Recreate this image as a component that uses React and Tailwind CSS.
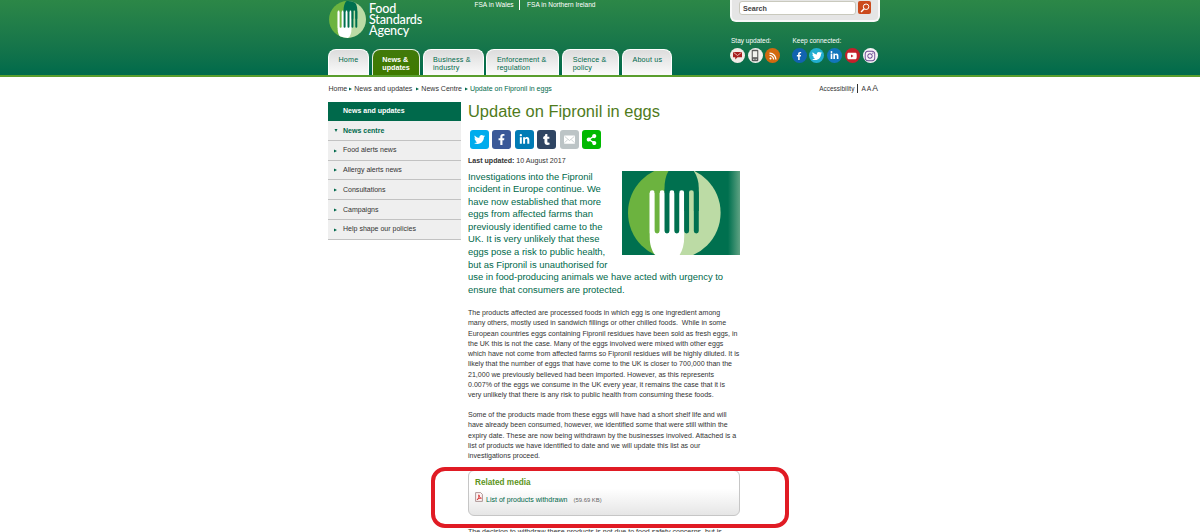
import React from 'react';
import {
  FaTwitter, FaFacebookF, FaLinkedinIn, FaTumblr, FaShareAlt, FaYoutube, FaInstagram, FaRss,
} from 'react-icons/fa';

const tabs = [
  { lines: ['Home'], width: 'w-[41px]' },
  { lines: ['News &', 'updates'], width: 'w-[48px]', active: true },
  { lines: ['Business &', 'industry'], width: 'w-[61px]' },
  { lines: ['Enforcement &', 'regulation'], width: 'w-[73px]' },
  { lines: ['Science &', 'policy'], width: 'w-[57px]' },
  { lines: ['About us'], width: 'w-[50px]' },
];

const sideLinks = ['Food alerts news', 'Allergy alerts news', 'Consultations', 'Campaigns', 'Help shape our policies'];

const shares = [
  { icon: FaTwitter, color: 'bg-[#00aced]' },
  { icon: FaFacebookF, color: 'bg-[#3b5998]' },
  { icon: FaLinkedinIn, color: 'bg-[#007bb5]' },
  { icon: FaTumblr, color: 'bg-[#2f4563]' },
  { icon: Envelope, color: 'bg-[#bcc4c6]' },
  { icon: FaShareAlt, color: 'bg-[#00b900]' },
];

const intro = [
  'Investigations into the Fipronil',
  'incident in Europe continue. We',
  'have now established that more',
  'eggs from affected farms than',
  'previously identified came to the',
  'UK. It is very unlikely that these',
  'eggs pose a risk to public health,',
  'but as Fipronil is unauthorised for',
  'use in food-producing animals we have acted with urgency to',
  'ensure that consumers are protected.',
];

const products = [
  'The products affected are processed foods in which egg is one ingredient among',
  'many others, mostly used in sandwich fillings or other chilled foods.\u00a0 While in some',
  'European countries eggs containing Fipronil residues have been sold as fresh eggs, in',
  'the UK this is not the case. Many of the eggs involved were mixed with other eggs',
  'which have not come from affected farms so Fipronil residues will be highly diluted. It is',
  'likely that the number of eggs that have come to the UK is closer to 700,000 than the',
  '21,000 we previously believed had been imported. However, as this represents',
  '0.007% of the eggs we consume in the UK every year, it remains the case that it is',
  'very unlikely that there is any risk to public health from consuming these foods.',
];

const shelfLife = [
  'Some of the products made from these eggs will have had a short shelf life and will',
  'have already been consumed, however, we identified some that were still within the',
  'expiry date. These are now being withdrawn by the businesses involved. Attached is a',
  'list of products we have identified to date and we will update this list as our',
  'investigations proceed.',
];

function Lines({ items }) {
  return items.map((line) => <span key={line} className="block whitespace-nowrap">{line}</span>);
}

function Envelope({ className }) {
  return (
    <svg viewBox="0 0 16 12" className={className} fill="none" stroke="#bcc4c6" strokeWidth="1.1">
      <rect width="16" height="12" rx="1" fill="#fff" stroke="none" />
      <path d="M1 1.5 8 7.5l7-6M1 10.5l4.500-4.500M15 10.5l-4.500-4.500" />
    </svg>
  );
}

// fork inside a plate, shared by the logo and the article image
function Fork({ id }) {
  return (
    <>
      <defs>
        <clipPath id={id}><circle cx="52.3" cy="41.7" r="46.3" /></clipPath>
      </defs>
      <g clipPath={`url(#${id})`}>
        <rect x="0" y="-6" width="60" height="100" fill="#6cb33f" />
        <rect x="56" y="-6" width="50" height="100" fill="#bcdba5" />
        <path d="M42.5 40V17C42.5 8 45 0 51 -6H66C73 -1 76.8 8 76.8 17V40Z" fill="#00704f" />
        <path d="M27.7 22H62.2V66C62.2 75 60 81 55 88H36C30 81 27.7 75 27.7 66Z" fill="#fff" />
      </g>
      <path d="M27.6 21.8V18H42.5V21.8Z" fill="#6cb33f" />
      <path d="M42.5 18H62.3V22.2H42.5Z" fill="#00704f" />
      <g strokeWidth="4.95" strokeLinecap="round">
        <path d="M30.2 21.8V62M40.1 21.8V62M49.9 21.8V62M59.7 21.8V62" stroke="#fff" />
        <path d="M69.4 21.8V62" stroke="#bcdba5" />
        <path d="M35.1 21.5V60" stroke="#6cb33f" />
        <path d="M45 21.5V60M54.8 21.5V60M64.6 21.5V60M74.3 21.5V60" stroke="#00704f" />
      </g>
    </>
  );
}

function Arrow() {
  return <svg viewBox="0 0 4 4" className="w-[3px] h-[4px]" fill="#00694b"><path d="M0 0 4 2 0 4Z" /></svg>;
}

function Round({ color, children }) {
  return <span className={`size-[15px] rounded-full flex items-center justify-center text-white ${color}`}>{children}</span>;
}

function Header() {
  return (
    <header className="h-[77px] border-b-2 border-[#5a9e2d] bg-linear-to-b from-[#2c8747] to-[#006a4b] overflow-hidden">
      <div className="ml-[328px] w-[552px] h-full flex justify-between">
        <div className="flex flex-col justify-between">
          <div className="flex items-start">
            <svg viewBox="6 -4.6 92.6 92.6" className="size-[37px] ml-px mt-[0.5px]"><Fork id="logo" /></svg>
            <div className="ml-[3px] mt-[4px] w-[105.5px] font-[Lato,sans-serif] font-medium text-white text-[12.6px] leading-[10.8px] tracking-[-0.2px]">
              <Lines items={['Food', 'Standards', 'Agency']} />
            </div>
            <div className="flex text-[6.55px] leading-[10px] text-white">
              <span className="pr-[5.5px] border-r border-white">FSA in Wales</span>
              <span className="pl-[7px]">FSA in Northern Ireland</span>
            </div>
          </div>
          <nav className="flex gap-[2.8px]">
            {tabs.map(({ lines, width, active }) => (
              <a
                key={lines[0]}
                className={`${width} h-[26px] rounded-t-[8px] pt-[5.5px] pl-[9.5px] border border-b-0 text-[7.2px] leading-[8px] ${
                  active
                    ? 'bg-linear-to-b from-[#417a0a] to-[#3f7a00] border-[#e4efe0] text-white font-bold'
                    : 'bg-linear-to-b from-[#dcdcdc] to-[#fbfbfb] border-white text-[#00694b] tracking-[0.16px]'
                }`}
              >
                <Lines items={lines} />
              </a>
            ))}
          </nav>
        </div>
        <div className="w-[150px]">
          <div className="h-[22px] rounded-b-[6px] bg-[#e5e5e5] border-2 border-t-0 border-[#f8f8f8] flex items-start pt-px pl-[7px] gap-[2px]">
            <div className="w-[117px] h-[14px] rounded-[3px] border border-[#c9c9bd] bg-white pl-[3px] text-[7.2px] leading-[13px] font-bold text-[#444]">Search</div>
            <div className="size-[13px] rounded-[2px] bg-[#cb4a1d] flex items-center justify-center">
              <svg viewBox="0 0 12 12" className="size-[10px]" fill="none" stroke="#fff" strokeWidth="1.2">
                <circle cx="7.3" cy="4.5" r="3.3" />
                <path d="M5 7 1.3 10.8" strokeWidth="1.7" />
              </svg>
            </div>
          </div>
          <div className="flex mt-[14px] pl-[1px] text-[6.5px] leading-[10px] text-white">
            <div className="w-[61.5px]">
              <p>Stay updated:</p>
              <div className="flex gap-[2.6px] mt-[2px] -ml-px">
                <Round color="bg-[#f1ece8]">
                  <svg viewBox="0 0 12 10" className="w-[11px] h-[9px]">
                    <path d="M1 1h10v6H6L3.5 9.5V7H1Z" fill="#a81f1f" />
                    <path d="M1.5 1.5 6 5l4.5-3.5" fill="none" stroke="#f3d8d4" strokeWidth=".9" />
                  </svg>
                </Round>
                <Round color="bg-[#f1f1ee]">
                  <svg viewBox="0 0 8 13" className="w-[8px] h-[13px]">
                    <rect x=".7" y=".7" width="6.6" height="11.6" rx="1" fill="#5a5a5a" />
                    <path d="M1.8 2.2h4.4v6H1.8Z" fill="#f1f1ee" />
                    <path d="M2 10.3h4" stroke="#d8d8d8" strokeWidth="1" strokeDasharray="1 .5" />
                  </svg>
                </Round>
                <Round color="bg-[#d2690f]"><FaRss className="size-[8px]" /></Round>
              </div>
            </div>
            <div>
              <p>Keep connected:</p>
              <div className="flex gap-[2.8px] mt-[2px] -ml-px">
                <Round color="bg-[#1263b0]"><FaFacebookF className="size-[8px]" /></Round>
                <Round color="bg-[#22aed0]"><FaTwitter className="size-[10px]" /></Round>
                <Round color="bg-[#1276bb]"><FaLinkedinIn className="size-[9px]" /></Round>
                <Round color="bg-[#c4202b]"><FaYoutube className="size-[10px]" /></Round>
                <Round color="bg-[#f6f2f6]"><FaInstagram className="size-[12px] text-[#6a4a92]" /></Round>
              </div>
            </div>
          </div>
        </div>
      </div>
    </header>
  );
}

function Sidebar() {
  return (
    <aside className="w-[133px] text-[7.03px] text-[#333]">
      <h2 className="h-[19px] bg-[#00694b] pl-[15px] leading-[18px] font-bold text-white">News and updates</h2>
      <div className="h-[19.8px] border-b border-[#c2c2c2] bg-[#efefef] flex items-center pt-px pl-[5.5px] font-bold text-[#00694b]">
        <svg viewBox="0 0 4 4" className="w-[4px] h-[3px] mr-[5.5px]" fill="#00694b"><path d="M0 0H4L2 4Z" /></svg>
        News centre
      </div>
      {sideLinks.map((link) => (
        <div key={link} className="h-[19.75px] border-b border-[#c2c2c2] bg-[#efefef] flex items-center gap-[6px] pt-px pl-[6px]">
          <Arrow />
          {link}
        </div>
      ))}
    </aside>
  );
}

function Article() {
  return (
    <main className="w-[272px] text-[#333]">
      <h1 className="h-[27px] text-[16.45px] leading-[18px] text-[#4f7b1c] whitespace-nowrap">Update on Fipronil in eggs</h1>
      <div className="flex gap-[3.4px] pl-[2px] pt-px">
        {shares.map(({ icon: Icon, color }) => (
          <span key={color} className={`size-[19px] rounded-[3px] flex items-center justify-center text-white ${color}`}>
            <Icon className="size-[11px]" />
          </span>
        ))}
      </div>
      <p className="mt-[6.5px] text-[7.08px] leading-[10px]"><b>Last updated:</b> 10 August 2017</p>
      <div className="mt-[5px] h-[126px] flex text-[9.43px] leading-[12.6px] text-[#00694b]">
        <div className="w-[154px]"><Lines items={intro} /></div>
        <svg viewBox="0 0 118 84" className="w-[118px] h-[84px] shrink-0">
          <defs>
            <linearGradient id="edge">
              <stop offset="0" stopColor="#00704f" />
              <stop offset="1" stopColor="#5fa283" />
            </linearGradient>
          </defs>
          <rect width="118" height="84" fill="#00704f" />
          <rect x="106" width="12" height="84" fill="url(#edge)" />
          <Fork id="photo" />
        </svg>
      </div>
      <div className="mt-[11.5px] text-[7.06px] leading-[10.27px]">
        <p><Lines items={products} /></p>
        <p className="mt-[9.8px]"><Lines items={shelfLife} /></p>
        <section className="mt-[8.3px] h-[46px] rounded-[6px] border border-[#c6c6c6] bg-linear-to-b from-white from-40% to-[#e6e6e6] pl-[6px] pt-[6px]">
          <h3 className="text-[8.2px] leading-[11px] font-bold text-[#5c9420]">Related media</h3>
          <div className="flex items-center mt-[6px] h-[12px] text-[#00694b]">
            <svg viewBox="0 0 8 10" className="w-[8px] h-[10px] mr-[3px] -mt-[5px]" fill="none">
              <path d="M.6.6h5l1.8 1.8v7H.6Z" fill="#fdf3f3" stroke="#9c7f7f" strokeWidth=".8" />
              <path d="M2 7.8C4 6.5 4.2 4 3.8 2.8 4.2 5 5 6 6.4 6.2 5 6 3 6.5 2 7.8Z" stroke="#d32a2a" strokeWidth=".9" />
            </svg>
            <span>List of products withdrawn</span>
            <span className="ml-[6px] text-[5.9px] text-[#666]">(59.69 KB)</span>
          </div>
        </section>
        <p className="mt-[11px] whitespace-nowrap">The decision to withdraw these products is not due to food safety concerns, but is</p>
      </div>
    </main>
  );
}

export default function App() {
  return (
    <div className="relative h-[532px] overflow-hidden bg-white font-['Liberation_Sans',Arial,sans-serif]">
      <Header />
      <div className="ml-[328px] w-[552px]">
        <div className="h-[25px] flex items-center justify-between text-[7.03px] text-[#333]">
          <div className="flex items-center pl-[0.5px]">
            <span className="mr-[2px]">Home</span>
            <Arrow />
            <span className="ml-[2px] mr-[4px]">News and updates</span>
            <Arrow />
            <span className="ml-[2px] mr-[3px]">News Centre</span>
            <Arrow />
            <span className="ml-[2px] text-[#00694b]">Update on Fipronil in eggs</span>
          </div>
          <div className="flex items-center pr-[2px] pb-[2px]">
            <span className="text-[6.45px] pr-[3px]">Accessibility</span>
            <span className="flex items-baseline gap-[1px] border-l border-[#333] pl-[3px] leading-[9px]">
              <span className="text-[6.5px]">A</span>
              <span className="text-[6.8px]">A</span>
              <span className="text-[8.6px]">A</span>
            </span>
          </div>
        </div>
        <div className="flex gap-[7px]">
          <Sidebar />
          <Article />
        </div>
      </div>
      <div className="absolute left-[431px] top-[467px] w-[358px] h-[61px] rounded-[14px] border-4 border-[#e01b24]" />
    </div>
  );
}
